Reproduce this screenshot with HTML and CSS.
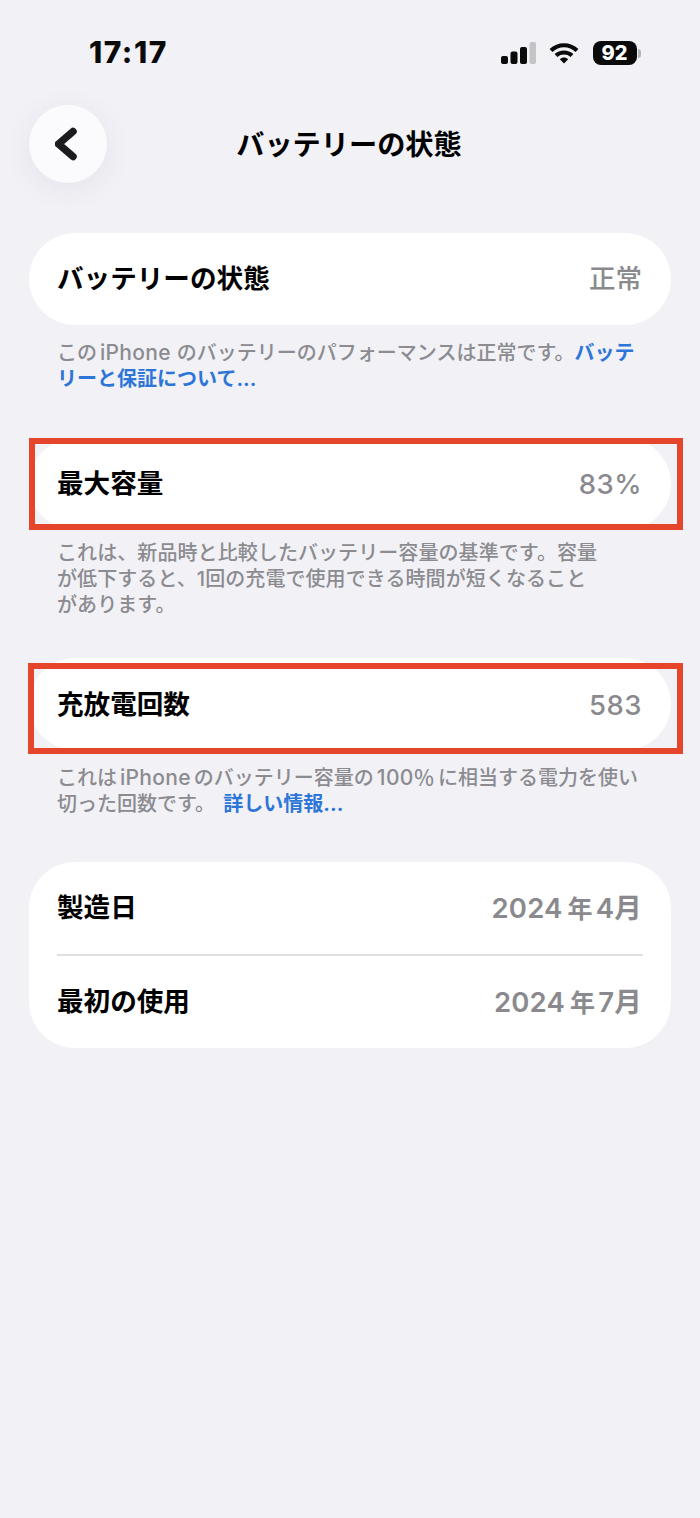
FILE: index.html
```html
<!DOCTYPE html>
<html lang="ja">
<head>
<meta charset="utf-8">
<title>バッテリーの状態</title>
<link rel="stylesheet" href="styles.css">
</head>
<body>
<div class="screen">
  <div class="status">
    <span class="time">17:17</span>
    <div class="status-icons">
      <svg class="signal" width="35" height="22" viewBox="0 0 35 22"><rect x="0" y="14" width="7" height="8" rx="2" fill="#0a0a0a"/><rect x="9.500" y="9.500" width="7" height="12.500" rx="2" fill="#0a0a0a"/><rect x="19" y="5" width="7" height="17" rx="2" fill="#0a0a0a"/><rect x="28.500" y="0" width="6.500" height="22" rx="2" fill="#c4c4c7"/></svg>
      <svg class="wifi" width="30" height="22" viewBox="0 0 30 22"><path d="M2 8.500C9.500 1.500 20.500 1.500 28 8.500M7 13.500C11.500 9.500 18.500 9.500 23 13.500" fill="none" stroke="#0a0a0a" stroke-width="4.200"/><path d="M10.800 17.200C13.200 15 16.800 15 19.200 17.200L15 21.500Z" fill="#0a0a0a"/></svg>
      <div class="battery"><span class="battery-body">92</span><span class="battery-cap"></span></div>
    </div>
  </div>

  <header class="nav">
    <button class="back" type="button" aria-label="戻る">
      <svg width="26" height="34" viewBox="0 0 26 34"><path d="M18 4.500 L3.500 17 L18 29.500" fill="none" stroke="#1c1c20" stroke-width="7.500" stroke-linecap="round" stroke-linejoin="round"/></svg>
    </button>
    <h1 class="nav-title">バッテリーの状態</h1>
  </header>

  <main class="content">
    <section class="group group-status">
      <div class="card">
        <div class="row"><span class="label">バッテリーの状態</span><span class="value">正常</span></div>
      </div>
      <p class="note">この<span class="latin latin-wide">iPhone</span>のバッテリーのパフォーマンスは正常です。<a class="link">バッテ<br>リーと保証について...</a></p>
    </section>

    <section class="group group-capacity">
      <div class="marked">
        <div class="card">
          <div class="row"><span class="label">最大容量</span><span class="value value-num">83%</span></div>
        </div>
        <div class="mark mark-capacity"></div>
      </div>
      <p class="note note-tight">これは、新品時と比較したバッテリー容量の基準です。容量<br>が低下すると、1回の充電で使用できる時間が短くなること<br>があります。</p>
    </section>

    <section class="group group-cycles">
      <div class="marked">
        <div class="card">
          <div class="row row-cycles"><span class="label">充放電回数</span><span class="value value-num">583</span></div>
        </div>
        <div class="mark mark-cycles"></div>
      </div>
      <p class="note">これは<span class="latin">iPhone</span>のバッテリー容量の<span class="latin">100％</span>に相当する電力を使い<br>切った回数です。 <a class="link link-gap">詳しい情報...</a></p>
    </section>

    <section class="group group-dates">
      <div class="card">
        <div class="row"><span class="label">製造日</span><span class="value value-date">2024<span class="unit">年</span>4月</span></div>
        <div class="divider"></div>
        <div class="row"><span class="label">最初の使用</span><span class="value value-date">2024<span class="unit">年</span>7月</span></div>
      </div>
    </section>
  </main>
</div>
</body>
</html>
```

FILE: styles.css
```css
* {
  box-sizing: border-box;
}

html,
body {
  margin: 0;
  padding: 0;
}

body {
  background: #f1f1f6;
  font-family: "Inter", "Noto Sans CJK JP", "Liberation Sans", sans-serif;
  color: #000;
}

.screen {
  width: 700px;
  height: 1518px;
  overflow: hidden;
}

.status {
  height: 105px;
  padding: 33px 59px 0 89px;
  display: flex;
  justify-content: space-between;
  align-items: flex-start;
}

.time {
  font-size: 30px;
  line-height: 38px;
  font-weight: 800;
  letter-spacing: 1.500px;
  color: #0a0a0a;
}

.status-icons {
  display: flex;
  align-items: center;
  gap: 13px;
  padding-top: 8px;
}

.battery {
  display: flex;
  align-items: center;
  gap: 1px;
  margin-left: 1px;
}

.battery-body {
  width: 44px;
  height: 24px;
  border-radius: 8px;
  background: #0a0a0a;
  color: #fff;
  font-size: 20px;
  line-height: 24px;
  font-weight: 800;
  text-align: center;
  padding-right: 1px;
}

.battery-cap {
  width: 3px;
  height: 9px;
  border-radius: 0 3px 3px 0;
  background: #b5b5b8;
}

.nav {
  height: 78px;
  padding-left: 29px;
  display: flex;
  align-items: center;
  position: relative;
}

.back {
  width: 78px;
  height: 78px;
  padding: 0;
  border: 0;
  border-radius: 50%;
  background: #fbfafd;
  box-shadow: 0 6px 30px rgba(60, 60, 80, 0.07);
  display: flex;
  align-items: center;
  justify-content: center;
}

.nav-title {
  position: absolute;
  left: 0;
  right: 2px;
  top: 0;
  bottom: 0;
  margin: 0;
  font-size: 28.200px;
  line-height: 81px;
  font-weight: 700;
  text-align: center;
}

.content {
  padding: 50px 29px 0;
}

.group-capacity {
  margin-top: 46px;
}

.group-cycles {
  margin-top: 40px;
}

.group-dates {
  margin-top: 45px;
}

.card {
  background: #fff;
  border-radius: 46px;
}

.row {
  height: 92px;
  padding: 0 29px 5px 28px;
  display: flex;
  align-items: center;
  justify-content: space-between;
}

.row-cycles {
  padding-bottom: 3px;
}

.label {
  font-size: 26.600px;
  font-weight: 700;
}

.value {
  font-size: 26.500px;
  font-weight: 500;
  color: #8a8a8e;
}

.value-num {
  font-size: 27.500px;
  letter-spacing: 0.500px;
  position: relative;
  top: 2px;
}

.value-date {
  font-size: 27.500px;
  font-weight: 600;
  letter-spacing: 0.200px;
}

.unit {
  font-size: 25px;
  margin: 0 3px 0 5px;
}

.divider {
  height: 2px;
  margin: 0 28px;
  background: #dfdfe2;
}

.note {
  margin: 15px 0 0;
  padding-left: 28px;
  font-size: 20px;
  line-height: 26px;
  font-weight: 500;
  color: #8b8b90;
  white-space: nowrap;
}

.note-tight {
  margin-top: 10px;
  letter-spacing: 0.080px;
}

.latin {
  margin: 0 3px;
  font-size: 21px;
  letter-spacing: 0.300px;
}

.latin-wide {
  margin-right: 6px;
}

.link {
  color: #2e75d8;
  font-weight: 700;
}

.link-gap {
  margin-left: 3px;
}

.marked {
  position: relative;
}

.mark {
  position: absolute;
  border: 6px solid #e5452b;
  pointer-events: none;
}

.mark-capacity {
  left: 0;
  top: 0;
  width: 654px;
  height: 92px;
}

.mark-cycles {
  left: -1px;
  top: 5px;
  width: 655px;
  height: 91px;
}
```
